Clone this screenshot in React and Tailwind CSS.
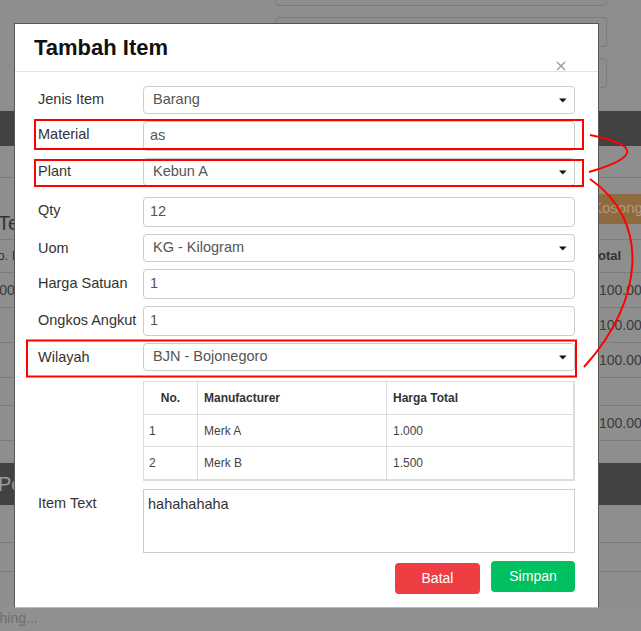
import React from 'react'

const Caret = () => (
  <svg width="8" height="5" viewBox="0 0 8 5" className="shrink-0">
    <path d="M0 0.5h7.5L3.75 4.5z" fill="#111" />
  </svg>
)

function Field({ label, top, labelTop = 'pt-[4px]', children }) {
  return (
    <div className={`flex items-start ${top}`}>
      <div className={`w-[105px] shrink-0 whitespace-nowrap leading-5 text-[14.5px] text-[#333] ${labelTop}`}>
        {label}
      </div>
      {children}
    </div>
  )
}

const TextBox = ({ value }) => (
  <div className="flex-1 h-[30px] flex items-center border border-[#ccc] rounded-[4px] pl-[6px] text-[14.5px] text-[#555]">
    {value}
  </div>
)

const SelectBox = ({ value }) => (
  <div className="flex-1 h-[28px] flex items-center justify-between border border-[#ccc] rounded-[4px] pl-[9px] pr-[7px] text-[14.5px] text-[#555]">
    <span>{value}</span>
    <Caret />
  </div>
)

const manufacturers = [
  { no: 1, name: 'Merk A', total: '1.000' },
  { no: 2, name: 'Merk B', total: '1.500' },
]

function Background() {
  return (
    <div className="flex flex-col">
      <div className="h-[111px] overflow-hidden">
        <div className="-mt-[24px] flex flex-col items-end gap-[11px] pr-[34px]">
          <div className="w-[332px] h-[30px] border border-[#7b7b7b] rounded-[4px]" />
          <div className="w-[332px] h-[30px] border border-[#7b7b7b] rounded-[4px]" />
          <div className="w-[332px] h-[30px] border border-[#7b7b7b] rounded-[4px]" />
        </div>
      </div>
      <div className="h-[35px] bg-[#424242]" />
      <div className="h-[32px] border-b border-[#7b7b7b]" />
      <div className="h-[62px] flex items-center border-b border-[#7b7b7b]">
        <span className="-ml-[2px] mt-[28px] text-[20px] text-[#333]">Tentang</span>
        <div className="ml-auto w-[46px] h-[30px] bg-[#8e6b3e] flex items-center text-[15px] text-[#b39a78] whitespace-nowrap overflow-hidden">
          <span className="-ml-[3px]">Kosong</span>
        </div>
      </div>
      <div className="h-[33px] flex items-center border-b border-[#7b7b7b] text-[13px] font-bold text-[#333]">
        <span className="-ml-[12px] font-normal">No. Item</span>
        <span className="ml-auto w-[50px] whitespace-nowrap overflow-hidden">Total</span>
      </div>
      {['100.000', '100.000', '100.000', '', '100.000'].map((v, i) => (
        <div
          key={i}
          className={`flex items-center border-b border-[#7b7b7b] text-[14px] text-[#3a3a3a] ${i === 3 ? 'h-[28px]' : 'h-[35px]'}`}
        >
          <span className="-ml-[28px]">{i === 0 ? v : ''}</span>
          <span className="ml-auto w-[42px] whitespace-nowrap overflow-hidden">{v}</span>
        </div>
      ))}
      <div className="h-[22px]" />
      <div className="h-[42px] bg-[#424242] flex items-center">
        <span className="-ml-[2px] text-[20px] text-[#9a9a9a]">Pembayaran</span>
      </div>
      <div className="h-[38px] border-b border-[#7b7b7b]" />
      <div className="h-[29px] border-b border-[#7b7b7b]" />
      <div className="h-[34px]" />
      <div className="h-[24px] bg-[#909090] flex items-center">
        <span className="-ml-[37px] text-[14px] text-[#6e6e6e]">Searching...</span>
      </div>
    </div>
  )
}

function Modal() {
  return (
    <div className="absolute left-[14px] top-[23px] w-[585px] h-[585px] bg-white border border-[#575757] border-b-[#bdbdbd] flex flex-col">
      <div className="relative h-[48px] shrink-0 border-b border-[#e3e3e3] pl-[19px] pt-[13px]">
        <h2 className="text-[22px] leading-[22px] font-bold text-[#111]">Tambah Item</h2>
        <svg width="10" height="10" viewBox="0 0 10 10" className="absolute right-[32px] top-[37px]">
          <path d="M1 1L9 9M9 1L1 9" stroke="#9a9a9a" strokeWidth="1.4" />
        </svg>
      </div>

      <div className="pl-[23px] pr-[23px] pt-[14px] flex flex-col">
        <Field label="Jenis Item" top="" labelTop="pt-[3px]">
          <SelectBox value="Barang" />
        </Field>
        <Field label="Material" top="mt-[7px]" labelTop="pt-[3px]">
          <TextBox value="as" />
        </Field>
        <Field label="Plant" top="mt-[7px]" labelTop="pt-[3px]">
          <SelectBox value="Kebun A" />
        </Field>
        <Field label="Qty" top="mt-[11px]" labelTop="pt-[3px]">
          <TextBox value="12" />
        </Field>
        <Field label="Uom" top="mt-[7px]">
          <SelectBox value="KG - Kilogram" />
        </Field>
        <Field label="Harga Satuan" top="mt-[7px]">
          <TextBox value="1" />
        </Field>
        <Field label="Ongkos Angkut" top="mt-[7px]">
          <TextBox value="1" />
        </Field>
        <Field label="Wilayah" top="mt-[7px]">
          <SelectBox value="BJN - Bojonegoro" />
        </Field>

        <div className="ml-[105px] mt-[10px] border-l border-t border-r-2 border-b-2 border-[#ddd] text-[12px]">
          <div className="flex h-[33px] border-b border-[#ddd] font-bold text-[#333]">
            <div className="w-[54px] border-r border-[#ddd] flex items-center justify-center">No.</div>
            <div className="w-[189px] border-r border-[#ddd] flex items-center pl-[6px]">Manufacturer</div>
            <div className="flex-1 flex items-center pl-[6px]">Harga Total</div>
          </div>
          {manufacturers.map((m, i) => (
            <div
              key={m.no}
              className={`flex h-[32px] text-[#444] ${i === 0 ? 'border-b border-[#ddd]' : ''}`}
            >
              <div className="w-[54px] border-r border-[#ddd] flex items-center pl-[5px]">{m.no}</div>
              <div className="w-[189px] border-r border-[#ddd] flex items-center pl-[6px]">{m.name}</div>
              <div className="flex-1 flex items-center pl-[6px]">{m.total}</div>
            </div>
          ))}
        </div>

        <Field label="Item Text" top="mt-[8px]">
          <div className="flex-1 h-[64px] border border-[#ccc] pl-[4px] pt-[4px] leading-5 text-[14.5px] text-[#333]">
            hahahahaha
          </div>
        </Field>

        <div className="flex justify-end items-start gap-[11px] mt-[8px]">
          <button className="mt-[2px] w-[85px] h-[31px] rounded-[4px] bg-[#ee3e44] text-white text-[14px]">
            Batal
          </button>
          <button className="w-[84px] h-[31px] rounded-[4px] bg-[#00c060] text-white text-[14px]">
            Simpan
          </button>
        </div>
      </div>
    </div>
  )
}

export default function App() {
  return (
    <div className="relative w-[641px] h-[631px] overflow-hidden bg-[#8e8e8e] font-['Liberation_Sans',Arial,sans-serif]">
      <Background />
      <Modal />

      {/* red annotations */}
      <svg width="641" height="631" viewBox="0 0 641 631" className="absolute inset-0 pointer-events-none" fill="none">
        <rect x="35" y="120" width="548" height="29" stroke="#f00" strokeWidth="2" />
        <rect x="35" y="160" width="548" height="26" stroke="#f00" strokeWidth="2" />
        <rect x="27" y="340.5" width="549" height="36" stroke="#f00" strokeWidth="2" />
        <path d="M590 135 Q665 150 589 172" stroke="#f00" strokeWidth="2" />
        <path d="M590 179 C650 220 645 300 584 367" stroke="#f00" strokeWidth="2" />
      </svg>
    </div>
  )
}
